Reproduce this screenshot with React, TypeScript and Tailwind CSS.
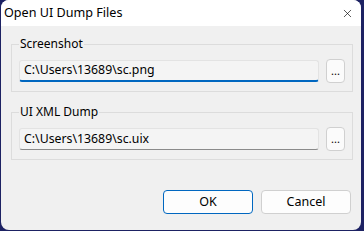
import { X } from "lucide-react";

const font = { fontFamily: '"Noto Sans", "Noto Sans CJK SC", sans-serif' };

function PathGroup({ label, value, focused }: { label: string; value: string; focused?: boolean }) {
  return (
    <fieldset className="w-[342px] border border-[#dcdcdc] px-[7px] pb-[8px] pt-[7px]">
      <legend className="ml-0 px-[1px] text-[12px] leading-[16px] text-black">{label}</legend>
      <div className="flex items-center gap-[7px]">
        <div
          className={
            "flex h-[22px] w-[300px] items-center rounded-[3px] border border-[#e3e3e3] bg-[#f4f4f4] pl-[4px] text-[12.3px] text-black " +
            (focused ? "border-b-2 border-b-[#0067c0]" : "border-b-[#8a8a8a]")
          }
        >
          {value}
        </div>
        <button
          type="button"
          className="flex h-[24px] w-[19px] items-end justify-center rounded-[4px] border border-[#d0d0d0] bg-[#fbfbfb] pb-[6px] text-[11px] leading-none text-black"
        >
          ...
        </button>
      </div>
    </fieldset>
  );
}

export default function App() {
  return (
    <div className="h-[231px] w-[364px] overflow-hidden bg-[#1d2263] pl-[1px]" style={font}>
      <div className="flex h-[230px] w-[360px] flex-col overflow-hidden rounded-[8px] bg-[#f0f0f0]">
        <header className="flex h-[26px] shrink-0 items-center justify-between bg-white pl-[3px] pr-[7px]">
          <span className="text-[12.6px] text-black">Open UI Dump Files</span>
          <X size={13} strokeWidth={1.2} className="text-black" />
        </header>
        <div className="flex flex-1 flex-col pl-[10px] pt-[10px]">
          <PathGroup label="Screenshot" value="C:\Users\13689\sc.png" focused />
          <div className="h-[12px]" />
          <PathGroup label="UI XML Dump" value="C:\Users\13689\sc.uix" />
          <div className="flex justify-end gap-[8px] pr-[10px] pt-[30px]">
            <button
              type="button"
              className="h-[24px] w-[90px] rounded-[4px] border border-[#0067c0] bg-[#fdfdfd] text-[12.5px] text-black"
            >
              OK
            </button>
            <button
              type="button"
              className="h-[24px] w-[90px] rounded-[4px] border border-[#d0d0d0] bg-[#fdfdfd] text-[12.5px] text-black"
            >
              Cancel
            </button>
          </div>
        </div>
      </div>
    </div>
  );
}
